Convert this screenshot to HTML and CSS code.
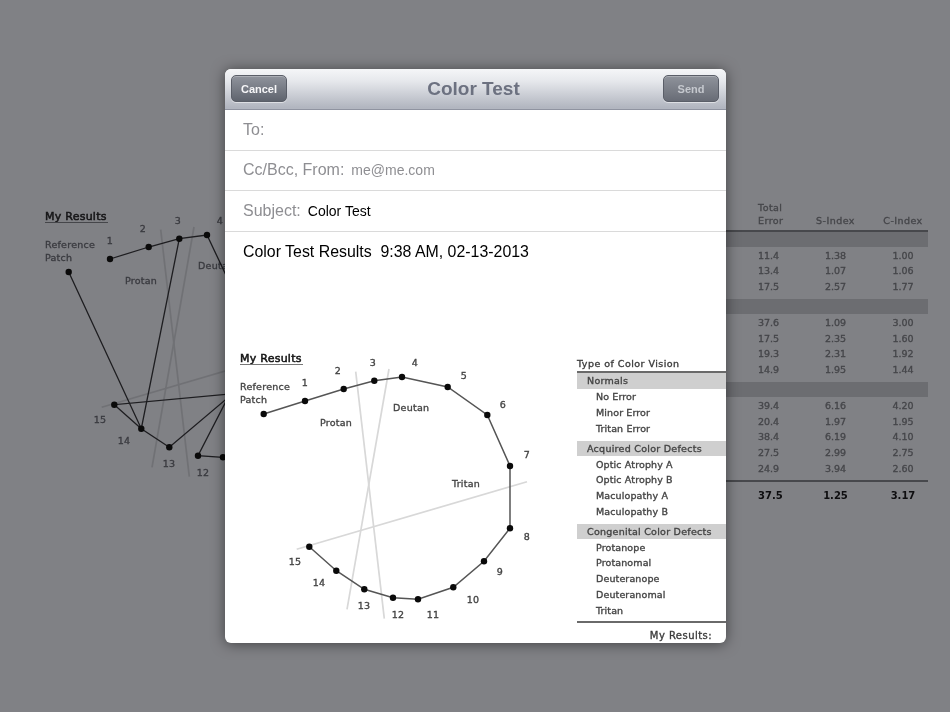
FILE: index.html
```html
<!DOCTYPE html>
<html lang="en">
<head>
<meta charset="utf-8">
<title>Color Test</title>
<link rel="stylesheet" href="styles.css">
</head>
<body>
<main class="backdrop">
  <svg class="plot plot-dim" width="352" height="303" viewBox="225 340 352 303">
    <text class="heading" x="240" y="362">My Results</text>
    <line class="heading-rule" x1="240" y1="364.5" x2="303" y2="364.5"/>
    <text x="240" y="390">Reference</text>
    <text x="240" y="403">Patch</text>
    <text x="320" y="425.5">Protan</text>
    <text x="393" y="410.5">Deutan</text>
    <g class="axes">
      <line x1="355.7" y1="371.7" x2="384.3" y2="618.7"/>
      <line x1="389" y1="369" x2="347" y2="609.3"/>
      <line x1="527" y1="481.7" x2="296.7" y2="549.3"/>
    </g>
    <polyline class="trace" points="263.7,414 336.3,570.7 374.3,380.7"/>
    <polyline class="trace" points="305,401 343.7,389 374.3,380.7 402,377 453,485"/>
    <polyline class="trace" points="510,528 309.3,546.7 336.3,570.7 364.3,589.3 510,466"/>
    <polyline class="trace" points="487,415 393,597.7 418,599.3"/>
    <g class="dots">
      <circle cx="263.7" cy="414" r="3.2"/><circle cx="305" cy="401" r="3.2"/><circle cx="343.7" cy="389" r="3.2"/><circle cx="374.3" cy="380.7" r="3.2"/><circle cx="402" cy="377" r="3.2"/>
      <circle cx="309.3" cy="546.7" r="3.2"/><circle cx="336.3" cy="570.7" r="3.2"/><circle cx="364.3" cy="589.3" r="3.2"/><circle cx="393" cy="597.7" r="3.2"/><circle cx="418" cy="599.3" r="3.2"/>
    </g>
    <g class="nums">
      <text x="305" y="385.5">1</text><text x="338" y="373.5">2</text><text x="373" y="365.5">3</text><text x="415" y="365.5">4</text>
      <text x="398" y="618">12</text><text x="364" y="609">13</text><text x="319" y="586">14</text><text x="295" y="565">15</text>
    </g>
  </svg>
  <section class="scores">
    <div class="score-head"><span>Total<br>Error</span><span>S-Index</span><span>C-Index</span></div>
    <div class="band"></div>
    <div class="score-row"><span>11.4</span><span>1.38</span><span>1.00</span></div>
    <div class="score-row"><span>13.4</span><span>1.07</span><span>1.06</span></div>
    <div class="score-row"><span>17.5</span><span>2.57</span><span>1.77</span></div>
    <div class="band"></div>
    <div class="score-row"><span>37.6</span><span>1.09</span><span>3.00</span></div>
    <div class="score-row"><span>17.5</span><span>2.35</span><span>1.60</span></div>
    <div class="score-row"><span>19.3</span><span>2.31</span><span>1.92</span></div>
    <div class="score-row"><span>14.9</span><span>1.95</span><span>1.44</span></div>
    <div class="band"></div>
    <div class="score-row"><span>39.4</span><span>6.16</span><span>4.20</span></div>
    <div class="score-row"><span>20.4</span><span>1.97</span><span>1.95</span></div>
    <div class="score-row"><span>38.4</span><span>6.19</span><span>4.10</span></div>
    <div class="score-row"><span>27.5</span><span>2.99</span><span>2.75</span></div>
    <div class="score-row"><span>24.9</span><span>3.94</span><span>2.60</span></div>
    <div class="score-total"><span>37.5</span><span>1.25</span><span>3.17</span></div>
  </section>
</main>

<div class="sheet">
  <header class="sheet-bar">
    <div><button class="bar-btn" type="button">Cancel</button></div>
    <h1 class="sheet-title">Color Test</h1>
    <div class="bar-end"><button class="bar-btn bar-btn-off" type="button">Send</button></div>
  </header>
  <div class="field"><span class="field-label">To:</span></div>
  <div class="field"><span class="field-label">Cc/Bcc, From:</span><span class="field-from">me@me.com</span></div>
  <div class="field"><span class="field-label">Subject:</span><span class="field-value">Color Test</span></div>
  <p class="message">Color Test Results&nbsp; 9:38 AM, 02-13-2013</p>
  <div class="figure">
    <svg class="plot" width="352" height="303" viewBox="225 340 352 303">
      <text class="heading" x="240" y="362">My Results</text>
      <line class="heading-rule" x1="240" y1="364.5" x2="303" y2="364.5"/>
      <text x="240" y="390">Reference</text>
      <text x="240" y="403">Patch</text>
      <text x="320" y="425.5">Protan</text>
      <text x="393" y="410.5">Deutan</text>
      <text x="452" y="486.5">Tritan</text>
      <g class="axes">
        <line x1="355.7" y1="371.7" x2="384.3" y2="618.7"/>
        <line x1="389" y1="369" x2="347" y2="609.3"/>
        <line x1="527" y1="481.7" x2="296.7" y2="549.3"/>
      </g>
      <polyline class="trace" points="263.7,414 305,401 343.7,389 374.3,380.7 402,377 447.7,387 487.3,415 510,466 510,528.3 484,561.3 453.3,587.3 418,599.3 393,597.7 364.3,589.3 336.3,570.7 309.3,546.7"/>
      <g class="dots">
        <circle cx="263.7" cy="414" r="3.2"/><circle cx="305" cy="401" r="3.2"/><circle cx="343.7" cy="389" r="3.2"/><circle cx="374.3" cy="380.7" r="3.2"/><circle cx="402" cy="377" r="3.2"/>
        <circle cx="447.7" cy="387" r="3.2"/><circle cx="487.3" cy="415" r="3.2"/><circle cx="510" cy="466" r="3.2"/><circle cx="510" cy="528.3" r="3.2"/><circle cx="484" cy="561.3" r="3.2"/>
        <circle cx="453.3" cy="587.3" r="3.2"/><circle cx="418" cy="599.3" r="3.2"/><circle cx="393" cy="597.7" r="3.2"/><circle cx="364.3" cy="589.3" r="3.2"/><circle cx="336.3" cy="570.7" r="3.2"/><circle cx="309.3" cy="546.7" r="3.2"/>
      </g>
      <g class="nums">
        <text x="305" y="385.5">1</text><text x="338" y="373.5">2</text><text x="373" y="365.5">3</text><text x="415" y="365.5">4</text><text x="464" y="378.5">5</text>
        <text x="503" y="407.5">6</text><text x="527" y="457.5">7</text><text x="527" y="539.5">8</text><text x="500" y="574.5">9</text><text x="473" y="602.5">10</text>
        <text x="433" y="618">11</text><text x="398" y="618">12</text><text x="364" y="609">13</text><text x="319" y="586">14</text><text x="295" y="565">15</text>
      </g>
    </svg>
    <section class="vision">
      <div class="vision-title">Type of Color Vision</div>
      <div class="band">Normals</div>
      <div class="vision-row">No Error</div>
      <div class="vision-row">Minor Error</div>
      <div class="vision-row">Tritan Error</div>
      <div class="band">Acquired Color Defects</div>
      <div class="vision-row">Optic Atrophy A</div>
      <div class="vision-row">Optic Atrophy B</div>
      <div class="vision-row">Maculopathy A</div>
      <div class="vision-row">Maculopathy B</div>
      <div class="band">Congenital Color Defects</div>
      <div class="vision-row">Protanope</div>
      <div class="vision-row">Protanomal</div>
      <div class="vision-row">Deuteranope</div>
      <div class="vision-row">Deuteranomal</div>
      <div class="vision-row">Tritan</div>
      <div class="vision-total">My Results:</div>
    </section>
  </div>
</div>
</body>
</html>
```
FILE: styles.css
```css
* { box-sizing: border-box; }
html, body { margin: 0; height: 100%; }
body {
  width: 950px;
  height: 712px;
  overflow: hidden;
  position: relative;
  background: #808185;
  font-family: "Liberation Sans", Arial, sans-serif;
}

/* dimmed page behind the sheet */
.backdrop {
  display: flex;
  justify-content: space-between;
  align-items: flex-start;
  padding: 198px 22px 0 30px;
}
.plot { display: block; flex: none; filter: blur(0.4px); }
.plot text {
  font: 9.5px "DejaVu Sans", sans-serif;
  fill: #444;
  stroke: #444;
  stroke-width: 0.35px;
  letter-spacing: 0.25px;
}
.plot .heading { font-size: 11px; fill: #111; stroke: #111; stroke-width: 0.5px; }
.heading-rule { stroke: #777; stroke-width: 1; }
.axes line { stroke: #d8d8d8; stroke-width: 1.7; }
.trace { fill: none; stroke: #555; stroke-width: 1.5; }
.dots circle { fill: #0a0a0a; }
.nums text { text-anchor: middle; }

.plot-dim text { fill: #3a3b40; stroke: #3a3b40; }
.plot-dim .heading { fill: #141416; stroke: #141416; }
.plot-dim .heading-rule { stroke: #45464a; }
.plot-dim .axes line { stroke: #707175; }
.plot-dim .trace { stroke: #1d1d20; stroke-width: 1.3; }

.band {
  height: 15.5px;
  margin-top: 4.5px;
  padding-left: 10px;
  font-size: 9.5px;
  line-height: 15.5px;
  letter-spacing: 0.27px;
}

.scores {
  flex: none;
  width: 203px;
  margin-top: 3px;
  font: 9.5px "DejaVu Sans", sans-serif;
  color: #45464a;
  -webkit-text-stroke: 0.35px #45464a;
  filter: blur(0.45px);
}
.score-head, .score-row, .score-total {
  display: grid;
  grid-template-columns: 68px 85px 50px;
  text-align: center;
}
.score-head > :first-child, .score-row > :first-child, .score-total > :first-child {
  text-align: left;
  padding-left: 33px;
}
.score-head {
  align-items: end;
  line-height: 13px;
  letter-spacing: 0.45px;
  padding-bottom: 2.5px;
  border-bottom: 2px solid #47484c;
}
.score-row { height: 15.75px; line-height: 15.75px; padding-top: 0.5px; }
.scores .band { background: #6c6d71; }
.score-head + .band { margin-top: 0; }
.score-total {
  margin-top: 3.5px;
  padding-top: 6px;
  font-size: 10px;
  line-height: 15px;
  border-top: 2px solid #47484c;
  font-weight: 700;
  color: #0e0e10;
  -webkit-text-stroke: 0;
}

/* compose sheet */
.sheet {
  position: absolute;
  left: 225px;
  top: 69px;
  width: 501px;
  height: 574px;
  background: #fff;
  border-radius: 6px;
  overflow: hidden;
  box-shadow: 0 1px 14px rgba(0, 0, 0, 0.5);
  display: flex;
  flex-direction: column;
}
.sheet-bar {
  flex: none;
  height: 41px;
  padding: 6px 7px 0 6px;
  display: grid;
  grid-template-columns: 1fr auto 1fr;
  align-items: start;
  background: linear-gradient(#f5f6f8, #e6e8ec 30%, #b2b6c0 96%);
  border-bottom: 1px solid #8f93a0;
  filter: blur(0.3px);
}
.bar-end { text-align: right; }
.sheet-title {
  margin: 0 3px 0 0;
  font-size: 19px;
  font-weight: 700;
  line-height: 27px;
  color: #6c7180;
}
.bar-btn {
  width: 56px;
  height: 27px;
  padding: 0;
  border: 1px solid #5a5e68;
  border-radius: 5px;
  background: linear-gradient(#90949d, #5f646e);
  box-shadow: inset 0 1px 0 rgba(255, 255, 255, 0.25), 0 1px 0 rgba(255, 255, 255, 0.5);
  color: #f6f6f8;
  font: 700 11px "Liberation Sans", Arial, sans-serif;
}
.bar-btn-off { color: #c5c8ce; background: linear-gradient(#8f939b, #686c76); }
.field {
  flex: none;
  height: 40.5px;
  padding-left: 18px;
  display: flex;
  align-items: center;
  gap: 7px;
  border-bottom: 1px solid #dadada;
  filter: blur(0.25px);
}
.field-label { font-size: 16px; color: #8e8e92; }
.field-from { font-size: 14px; color: #8e8e92; }
.field-value { font-size: 14px; color: #000; }
.message {
  flex: none;
  height: 108.9px;
  margin: 0;
  padding: 10.5px 0 0 18px;
  font-size: 15.9px;
  line-height: 20px;
  color: #000;
  filter: blur(0.25px);
}
.figure { flex: 1; min-height: 0; display: flex; }
.vision {
  flex: none;
  width: 149px;
  font: 9.5px "DejaVu Sans", sans-serif;
  letter-spacing: 0.12px;
  color: #444;
  -webkit-text-stroke: 0.35px #444;
  filter: blur(0.4px);
}
.vision-title {
  height: 33px;
  padding-top: 16.5px;
  line-height: 13px;
  border-bottom: 2px solid #6a6a6a;
  color: #333;
  letter-spacing: 0.47px;
}
.vision .band { background: #cfcfcf; }
.vision-title + .band { margin-top: 0; }
.vision-row { height: 15.75px; line-height: 15.75px; padding-left: 19px; padding-top: 0.5px; }
.vision-total {
  margin-top: 3px;
  padding: 5.5px 14px 0 0;
  line-height: 15px;
  font-size: 10px;
  letter-spacing: 0.45px;
  text-align: right;
  border-top: 2px solid #6a6a6a;
  color: #333;
}
```
